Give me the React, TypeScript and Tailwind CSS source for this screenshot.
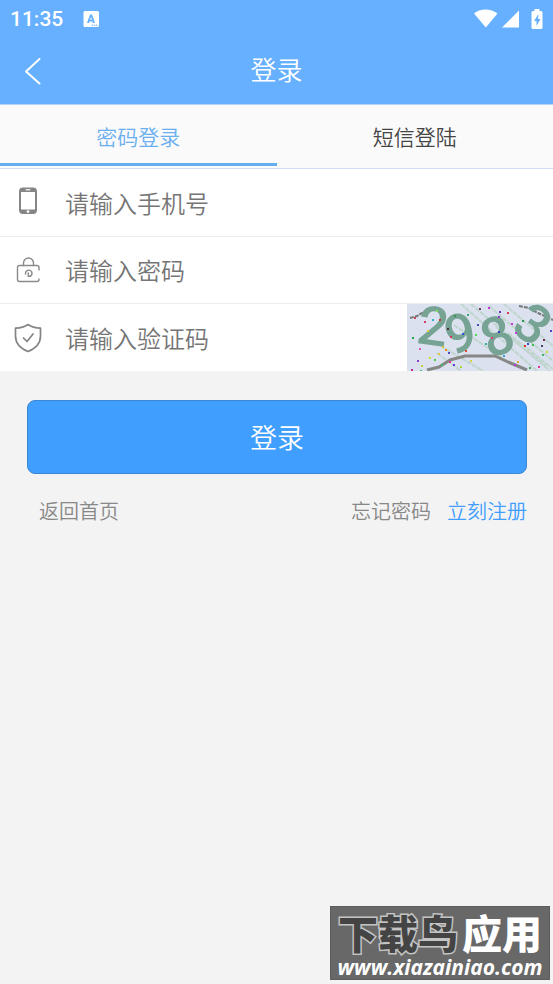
import React from "react";

const confetti = [
  [29, 6, "#7de05a"], [17, 17, "#d8396b"], [25, 15, "#2fb4c9"], [32, 15, "#c43b34"],
  [5, 33, "#1fae4b"], [12, 44, "#e05bb8"], [10, 56, "#8e3fd0"], [14, 61, "#c7d53a"],
  [4, 65, "#b8308b"], [13, 66, "#3ac46a"], [22, 53, "#c2e23a"], [27, 55, "#54c94a"],
  [40, 24, "#4b2f3f"], [43, 32, "#e0365d"], [47, 11, "#3f8f55"], [55, 29, "#3454d8"],
  [58, 46, "#d94b2a"], [35, 42, "#d8c53a"], [38, 45, "#e28d2a"], [41, 48, "#5947c9"],
  [42, 57, "#e0388e"], [34, 60, "#3dbd6a"], [46, 60, "#5b3fd8"], [53, 62, "#a3d83a"],
  [60, 10, "#3da86a"], [72, 4, "#7a3557"], [81, 3, "#c42fd8"], [70, 20, "#3f55b8"],
  [92, 7, "#6a2fd0"], [91, 12, "#9c35c9"], [100, 8, "#d83a4f"], [104, 19, "#c835d8"],
  [108, 28, "#c73ae0"], [115, 16, "#2f8f4b"], [68, 30, "#54d85a"], [78, 39, "#2fb49a"],
  [84, 33, "#e03a6b"], [91, 27, "#3d3fb8"], [117, 41, "#d8342f"], [120, 39, "#2f4fd8"],
  [125, 40, "#3dbd4a"], [134, 41, "#3f3f6a"], [136, 35, "#7a2f55"], [139, 47, "#c9d83a"],
  [107, 60, "#b53ad8"], [110, 57, "#d8a53a"], [122, 63, "#3fa84a"], [143, 26, "#5b3fc4"],
  [146, 54, "#3db48a"], [131, 62, "#d83a9a"], [63, 56, "#d8d23a"], [96, 51, "#3f9fd8"],
  [20, 26, "#e3d23a"], [31, 49, "#e2c83a"], [135, 50, "#3fb46a"], [7, 13, "#c9425a"],
] as const;

function Captcha() {
  return (
    <svg viewBox="0 0 146 67" preserveAspectRatio="none" className="block h-full w-full" role="img" aria-label="2983">
      <rect width="146" height="67" fill="#dbe1ee" />
      <g stroke="#bfd5ce" strokeWidth="2" strokeDasharray="5 1" fill="none">
        <path d="M54 0 L130 67M64 0 L143 67M82 2 L146 57M97 0 L146 42M34 42 L76 67M47 21 L100 57M30 49 L54 67M89 23 L139 62M101 29 L146 65" />
      </g>
      <path d="M3 14 L10 12 L15 9 L23 6" stroke="#777a78" strokeWidth="2" strokeDasharray="4 1" fill="none" />
      <path d="M112 2 L122 4 L131 9 L146 16" stroke="#777a78" strokeWidth="2" strokeDasharray="4 1" fill="none" />
      <path d="M20 66 L32 63 L43 56 L58 52 L88 52 L101 58 L120 66" stroke="#868785" strokeWidth="3" fill="none" />
      <g fill="#76a394" textAnchor="middle" className="font-['Roboto'] text-[54px] font-medium">
        <text x="0" y="19" transform="translate(26 22) rotate(8)">2</text>
        <text x="0" y="19" transform="translate(53 29) rotate(-14)">9</text>
        <text x="0" y="19" transform="translate(90 32) rotate(-22)">8</text>
        <text x="0" y="19" transform="translate(126 20) rotate(36)">3</text>
      </g>
      {confetti.map(([x, y, color]) => (
        <rect key={`${x}-${y}`} x={x} y={y} width="2" height="2" fill={color} />
      ))}
    </svg>
  );
}

function PhoneIcon() {
  return (
    <svg width="20" height="32" viewBox="-1 0 20 32" aria-hidden="true">
      <path fillRule="evenodd" fill="#858585" d="M4 0.5h10a4 4 0 0 1 4 4v18.500a4 4 0 0 1-4 4H4a4 4 0 0 1-4-4V4.500a4 4 0 0 1 4-4zM2 5v17.500h14V5z" />
      <rect x="6.500" y="2" width="5" height="1.500" rx="0.700" fill="#e5e5e5" />
      <circle cx="9" cy="24.600" r="1.400" fill="#fff" />
    </svg>
  );
}

function LockIcon() {
  return (
    <svg width="24" height="26" viewBox="0 0 24 26" fill="none" stroke="#8a8a8a" strokeWidth="1.400" strokeLinecap="round" aria-hidden="true">
      <path d="M23 13V10.500a2 2 0 0 0-2-2H3.500a2 2 0 0 0-2 2V22.500a2 2 0 0 0 2 2H21a2 2 0 0 0 2-2V22" />
      <path d="M7.500 8.500V6a5 5 0 0 1 10 0v2.500" />
      <path d="M9.600 17a3.200 3.200 0 1 1 5 2M12.300 16v3.200h2.400" />
    </svg>
  );
}

function ShieldIcon() {
  return (
    <svg width="28" height="30" viewBox="0 0 28 30" fill="none" stroke="#858585" strokeWidth="1.700" strokeLinecap="round" strokeLinejoin="round" aria-hidden="true">
      <path d="M14 1.500C10.500 4 6 5 1.500 5.200V13c0 7.500 5 12.500 12.500 15.500C21.500 25.500 26.500 20.500 26.500 13V5.200C21.500 5 17.500 4 14 1.500z" />
      <path d="M9.500 15l3.500 3.500 6-7.500" />
    </svg>
  );
}

function Field({ id, label, type, icon, children }: {
  id: string;
  label: string;
  type: string;
  icon: React.ReactNode;
  children?: React.ReactNode;
}) {
  return (
    <div className="flex h-[67px] items-stretch border-b border-[#ececec] last:border-b-0">
      <label htmlFor={id} aria-label={label} className="flex w-14 shrink-0 items-center justify-center">
        {icon}
      </label>
      <input
        id={id}
        type={type}
        placeholder={label}
        className="min-w-0 flex-1 bg-transparent pt-1 pl-[9px] text-2xl text-[#333] outline-none placeholder:text-[#757575]"
      />
      {children}
    </div>
  );
}

export default function App() {
  return (
    <div className="relative min-h-screen bg-[#f3f3f3] font-['Roboto','Noto_Sans_CJK_SC',sans-serif] [font-weight:350]">
      <header className="border-b border-[#b5d6fb] bg-[#66b0ff] text-white">
        <div className="flex h-[38px] items-center justify-between pr-[10px] pl-[10px]">
          <div className="flex items-center gap-5">
            <span className="text-[21px] leading-none font-medium">11:35</span>
            <svg width="16" height="16" viewBox="0 0 16 16" aria-hidden="true">
              <path fillRule="evenodd" fill="#fff" d="M2 0h12.500a1.500 1.500 0 0 1 1.500 1.500V14.500a1.500 1.500 0 0 1-1.500 1.500H2A1.500 1.500 0 0 1 .5 14.500v-13A1.500 1.500 0 0 1 2 0zM7 3.500 4 12h2l.5-1.600h3l.5 1.600h2L9.100 3.500zM8 5.800 8.900 8.800H7.100z" />
              <path d="M8.500 14.200h6" stroke="#66b0ff" strokeDasharray="1.500 0.700" />
            </svg>
          </div>
          <svg width="70" height="22" viewBox="0 0 70 22" fill="#fff" aria-hidden="true">
            <path d="M1 5.500C7 .2 17.500 .2 24.500 5.500L12.800 19.500z" />
            <path d="M46 2.500v17H29z" />
            <path fillRule="evenodd" d="M61.500 1h5v2h1.500a1.500 1.500 0 0 1 1.500 1.500v15a1.500 1.500 0 0 1-1.500 1.500H60a1.500 1.500 0 0 1-1.500-1.500v-15A1.500 1.500 0 0 1 60 3h1.500zM65.500 6l-4.500 7h2.500v5l4-7H65z" />
          </svg>
        </div>
        <div className="grid h-[66px] grid-cols-[64px_1fr_64px] items-center">
          <button type="button" aria-label="返回" className="flex h-full items-center pl-6">
            <svg width="18" height="28" viewBox="0 0 18 28" fill="none" stroke="#fff" strokeWidth="2" strokeLinecap="round" strokeLinejoin="round" aria-hidden="true">
              <path d="M15.500 2 2 14.500 15.500 26.500" />
            </svg>
          </button>
          <h1 className="text-center text-[26px] leading-8 [font-weight:350]">登录</h1>
        </div>
      </header>

      <nav role="tablist" className="grid h-16 grid-cols-2 border-b border-[#cfdcf3] bg-[#fafafa] text-[21px]">
        <button type="button" role="tab" aria-selected="true" className="relative pt-1 text-[#6aaff0]">
          密码登录
          <span className="absolute inset-x-0 bottom-[2px] h-[3px] bg-[#66adf0]" />
        </button>
        <button type="button" role="tab" aria-selected="false" className="pt-1 text-[#444]">
          短信登陆
        </button>
      </nav>

      <form onSubmit={(e) => e.preventDefault()}>
        <div className="bg-white pt-px">
          <Field id="phone" type="tel" label="请输入手机号" icon={<PhoneIcon />} />
          <Field id="password" type="password" label="请输入密码" icon={<LockIcon />} />
          <Field id="code" type="text" label="请输入验证码" icon={<ShieldIcon />}>
            <button type="button" aria-label="刷新验证码" className="w-[146px] shrink-0">
              <Captcha />
            </button>
          </Field>
        </div>

        <div className="pt-[29px] pr-[26px] pl-[27px]">
          <button type="submit" className="h-[74px] w-full rounded-lg border border-[#3b87d3] bg-[#409eff] pt-1 text-[27px] text-white">
            登录
          </button>
          <div className="mt-6 flex items-center gap-4 pl-3 text-xl text-[#888]">
            <a href="#home" className="mr-auto">返回首页</a>
            <a href="#forgot">忘记密码</a>
            <a href="#register" className="text-[#409eff]">立刻注册</a>
          </div>
        </div>
      </form>

      <aside className="absolute right-[3px] bottom-1 flex h-[74px] w-[220px] flex-col items-center justify-end border border-[#5c5c5c] bg-[#686868] whitespace-nowrap">
        <div className="flex gap-1 font-['Noto_Sans_CJK_SC',sans-serif] text-[40px] leading-[46px] font-black">
          <span className="text-[#444] [-webkit-text-stroke:3px_#c4c4c4] [paint-order:stroke_fill]">下载鸟</span>
          <span className="text-white">应用</span>
        </div>
        <div className="font-['Open_Sans',sans-serif] text-[21px] leading-6 font-bold text-white italic">www.xiazainiao.com</div>
      </aside>
    </div>
  );
}
